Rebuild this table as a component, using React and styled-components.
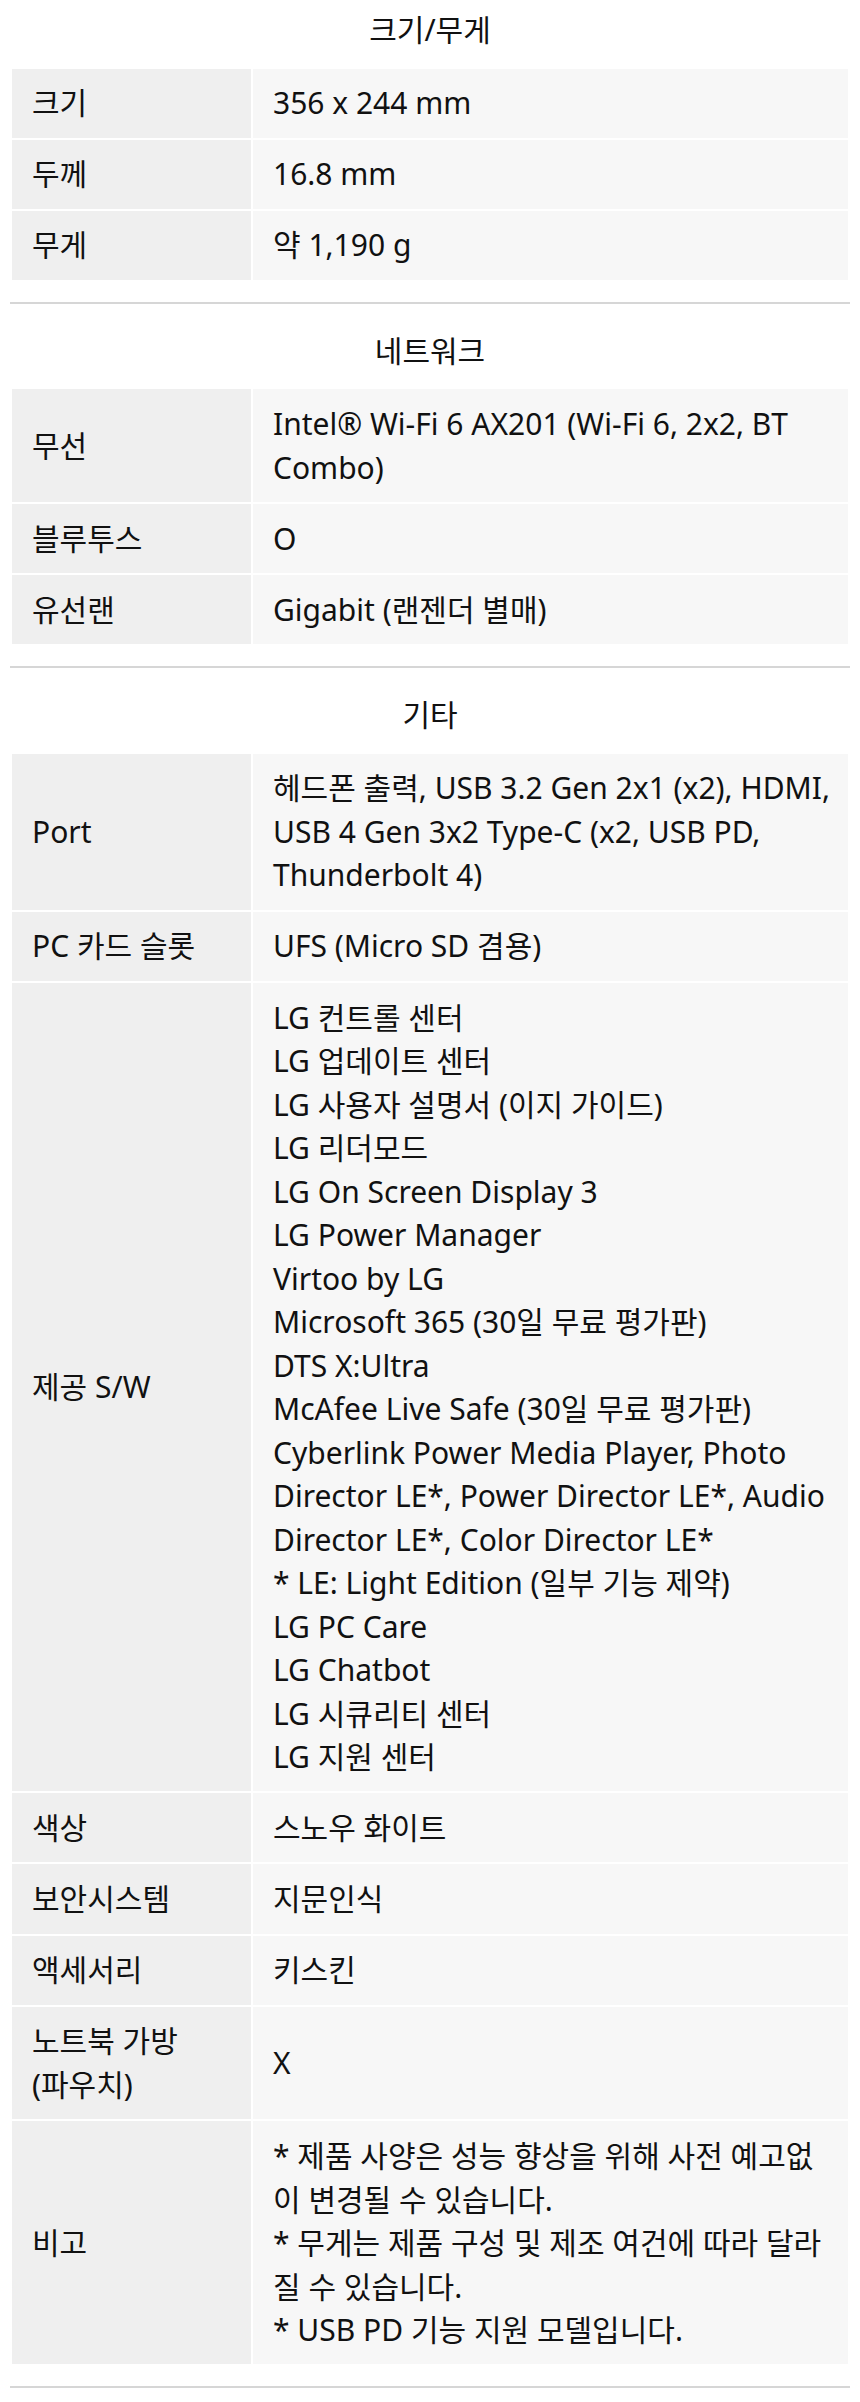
import React from 'react';
import styled, { createGlobalStyle } from 'styled-components';

const GlobalStyle = createGlobalStyle`
  body {
    margin: 0;
    background: #ffffff;
    color: #111111;
    font-family: "Noto Sans", "Noto Sans CJK KR", sans-serif;
  }
`;

const Page = styled.div`
  padding: 0 10px;
`;

const Section = styled.section`
  padding: 25px 0 20px;
  border-bottom: 2px solid #d6d6d6;

  &:first-child {
    padding-top: 8px;
  }
`;

const Title = styled.h3`
  margin: 0 0 15px;
  font-size: 30px;
  font-weight: 400;
  line-height: 43.5px;
  text-align: center;
`;

const SpecTable = styled.table`
  width: 100%;
  border-collapse: separate;
  border-spacing: 2px;
  font-size: 30px;
  line-height: 43.5px;
`;

const Label = styled.th`
  box-sizing: border-box;
  width: 239px;
  padding: 12.8px 20px;
  background: #efefef; // label column
  font-weight: 400;
  text-align: left;
  vertical-align: middle;
  word-break: keep-all;
`;

const Value = styled.td`
  padding: 12.8px 13px 12.8px 20px;
  background: #f7f7f7; // value column
  text-align: left;
  vertical-align: middle;
`;

const Line = styled.div``;

const sections = [
  {
    title: '크기/무게',
    rows: [
      ['크기', '356 x 244 mm'],
      ['두께', '16.8 mm'],
      ['무게', '약 1,190 g'],
    ],
  },
  {
    title: '네트워크',
    rows: [
      ['무선', 'Intel® Wi-Fi 6 AX201 (Wi-Fi 6, 2x2, BT Combo)'],
      ['블루투스', 'O'],
      ['유선랜', 'Gigabit (랜젠더 별매)'],
    ],
  },
  {
    title: '기타',
    rows: [
      ['Port', '헤드폰 출력, USB 3.2 Gen 2x1 (x2), HDMI, USB 4 Gen 3x2 Type-C (x2, USB PD, Thunderbolt 4)'],
      ['PC 카드 슬롯', 'UFS (Micro SD 겸용)'],
      [
        '제공 S/W',
        [
          'LG 컨트롤 센터',
          'LG 업데이트 센터',
          'LG 사용자 설명서 (이지 가이드)',
          'LG 리더모드',
          'LG On Screen Display 3',
          'LG Power Manager',
          'Virtoo by LG',
          'Microsoft 365 (30일 무료 평가판)',
          'DTS X:Ultra',
          'McAfee Live Safe (30일 무료 평가판)',
          'Cyberlink Power Media Player, Photo Director LE*, Power Director LE*, Audio Director LE*, Color Director LE*',
          '* LE: Light Edition (일부 기능 제약)',
          'LG PC Care',
          'LG Chatbot',
          'LG 시큐리티 센터',
          'LG 지원 센터',
        ],
      ],
      ['색상', '스노우 화이트'],
      ['보안시스템', '지문인식'],
      ['액세서리', '키스킨'],
      ['노트북 가방 (파우치)', 'X'],
      [
        '비고',
        [
          '* 제품 사양은 성능 향상을 위해 사전 예고없이 변경될 수 있습니다.',
          '* 무게는 제품 구성 및 제조 여건에 따라 달라질 수 있습니다.',
          '* USB PD 기능 지원 모델입니다.',
        ],
      ],
    ],
  },
];

const App = () => {
  return (
    <>
      <GlobalStyle />
      <Page>
        {sections.map((section) => (
          <Section key={section.title}>
            <Title>{section.title}</Title>
            <SpecTable>
              <tbody>
                {section.rows.map(([label, value]) => (
                  <tr key={label}>
                    <Label>{label}</Label>
                    <Value>
                      {Array.isArray(value)
                        ? value.map((item) => <Line key={item}>{item}</Line>)
                        : value}
                    </Value>
                  </tr>
                ))}
              </tbody>
            </SpecTable>
          </Section>
        ))}
      </Page>
    </>
  );
};

export default App;
